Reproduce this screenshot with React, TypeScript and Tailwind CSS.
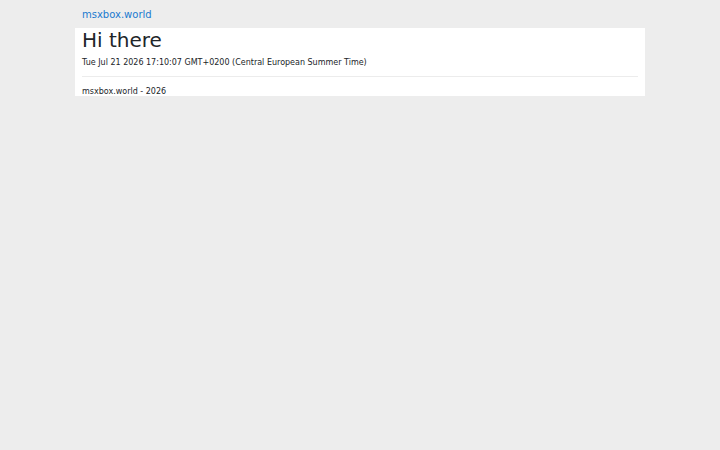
import React from "react";

function App() {
  const stamp = "Tue Jul 21 2026 17:10:07 GMT+0200 (Central European Summer Time)";

  return (
    <div
      className="min-h-[450px] w-full bg-[#ededed] text-[#212529]"
      style={{ fontFamily: '"DejaVu Sans", sans-serif' }}
    >
      <div className="w-[570px] mx-auto">
        <div className="h-[28px] flex items-center px-[7px] pt-[2px]">
          <a href="#" className="text-[10px] text-[#1a7acf] leading-[12px]">
            msxbox.world
          </a>
        </div>

        <div className="bg-white px-[7px]">
          <h1 className="text-[20px] leading-[24px] font-normal">Hi there</h1>
          <p className="mt-[5px] text-[8px] leading-[12px]">{stamp}</p>
          <hr className="mt-[7px] border-t border-[#ececec]" />
          <div className="mt-[11px] text-[8px] leading-[8px]">msxbox.world - 2026</div>
        </div>
      </div>
    </div>
  );
}

export default App;
